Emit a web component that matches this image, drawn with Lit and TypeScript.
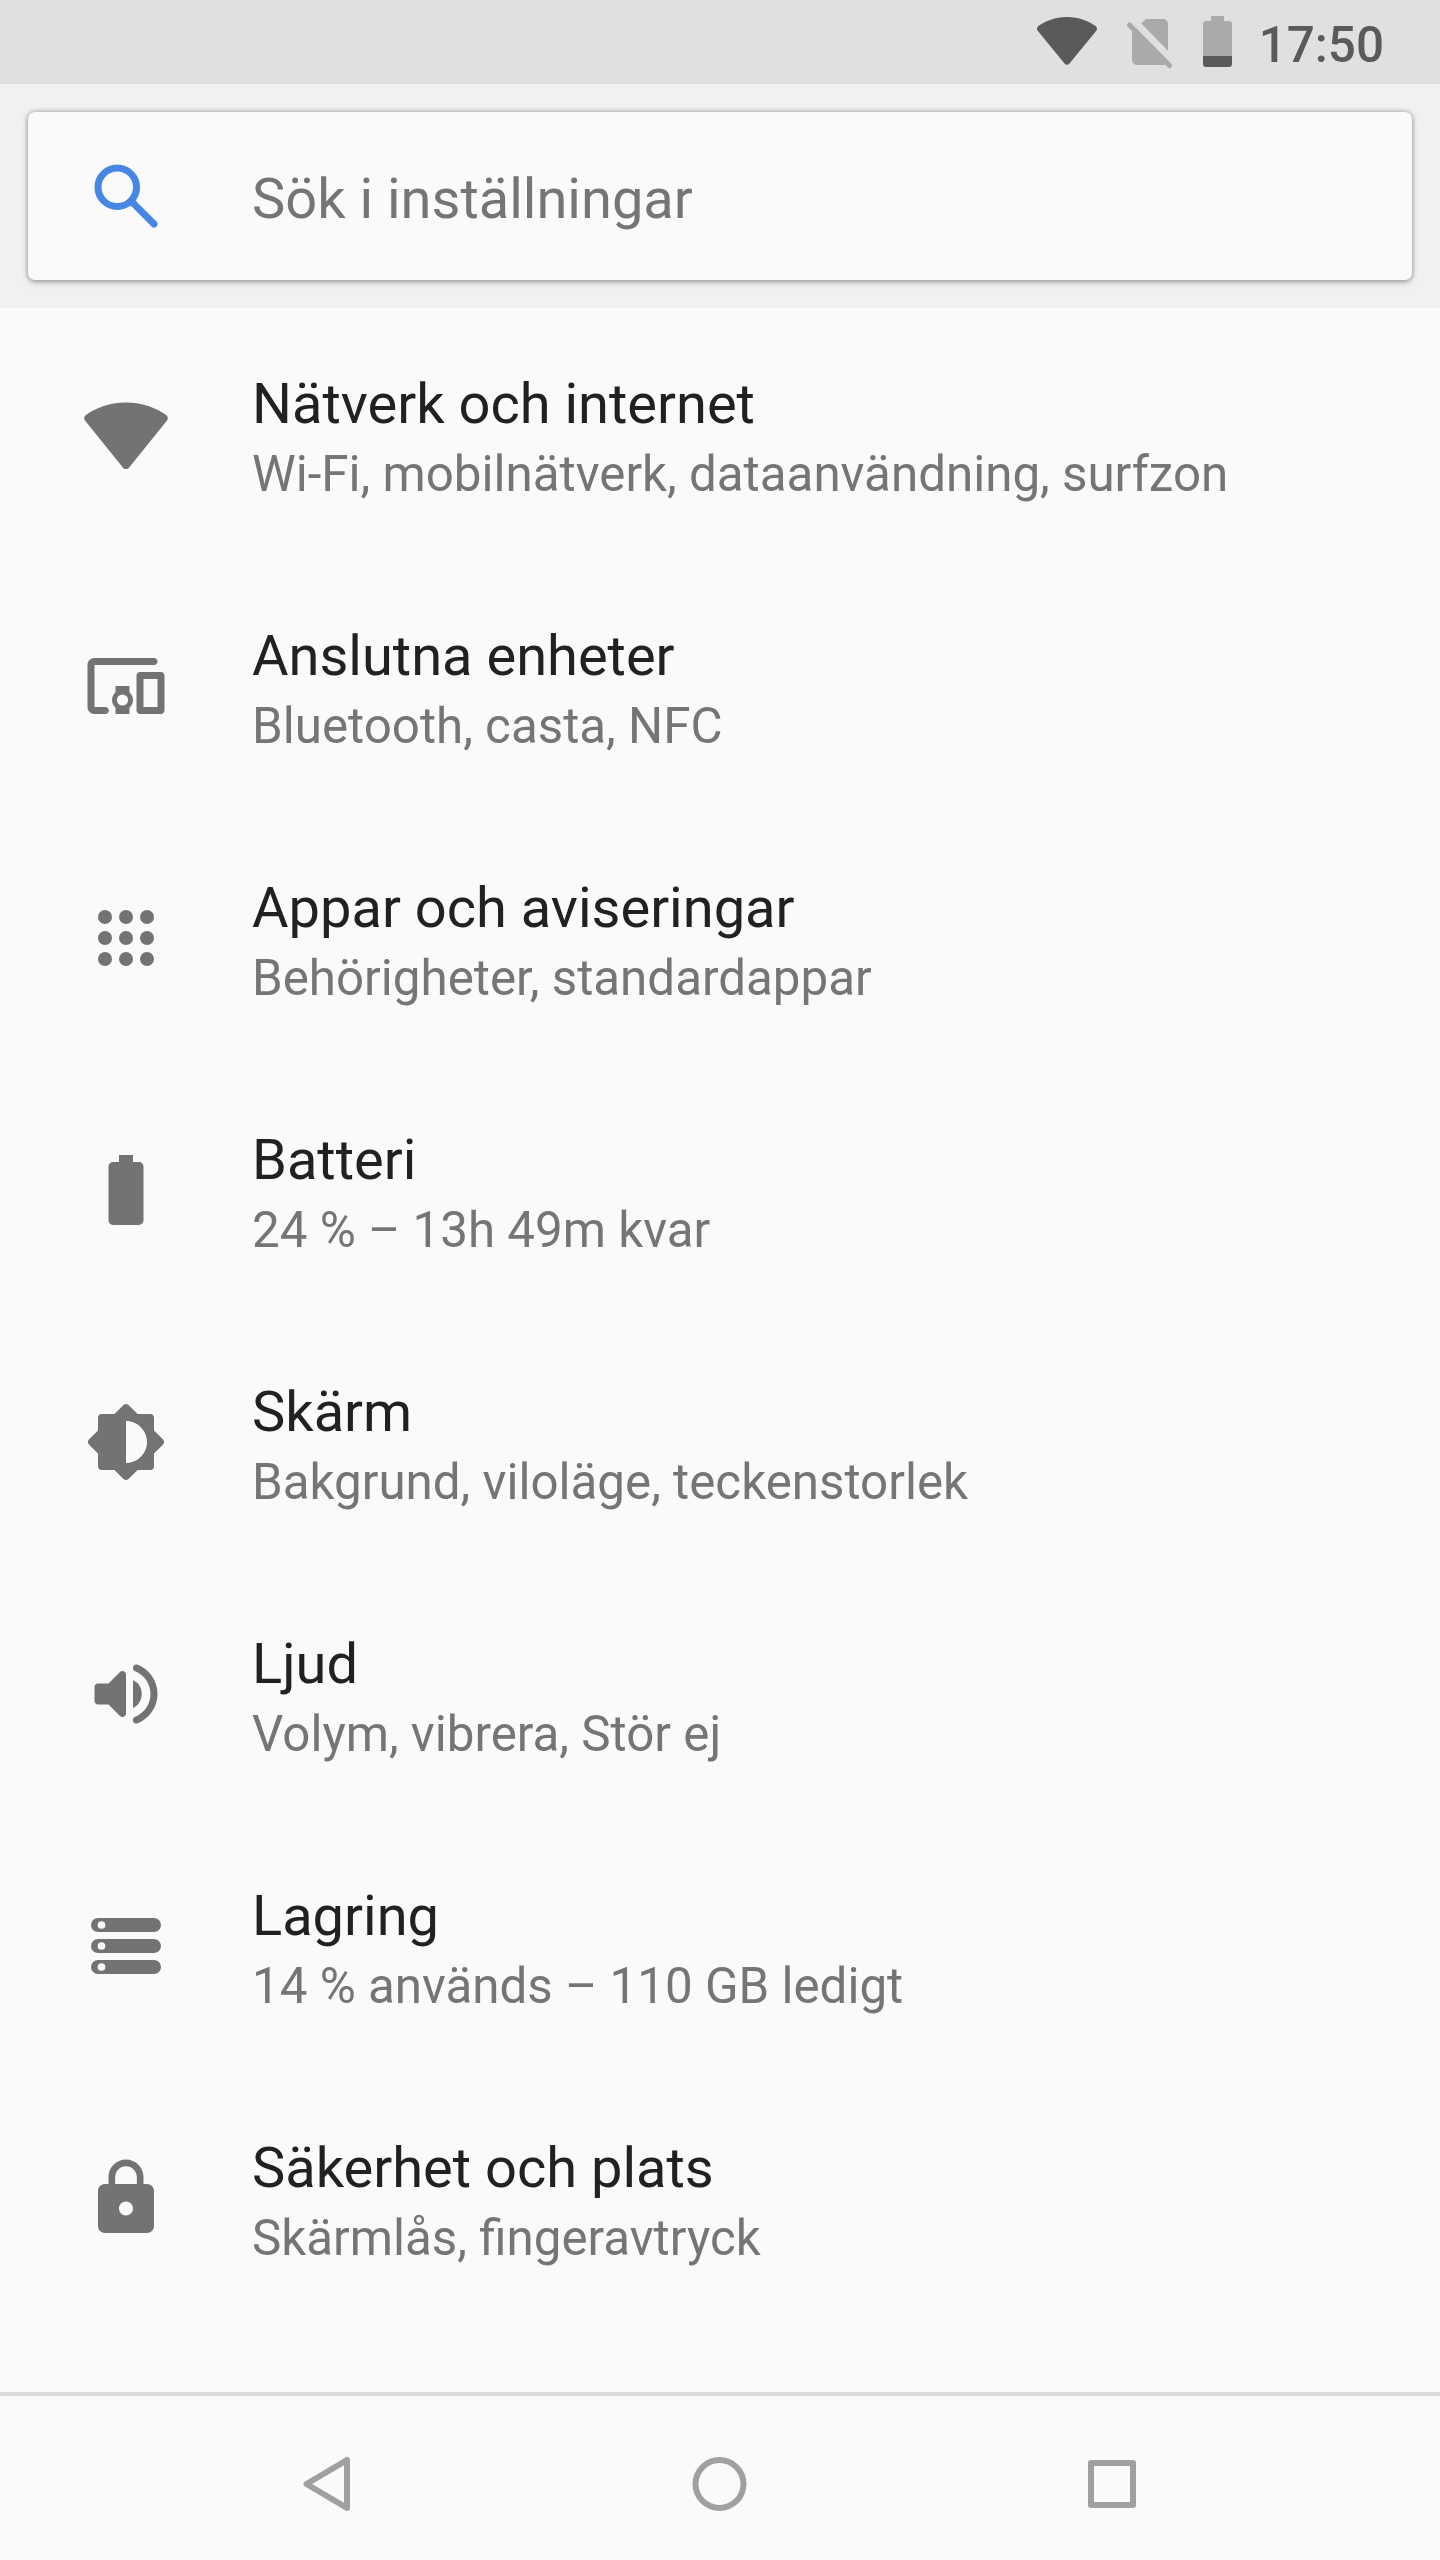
import { LitElement, html, css, svg } from "lit";
import { customElement, property } from "lit/decorators.js";

const icons: Record<string, unknown> = {
  wifi: svg`<path d="M12 3C7 3 3.2 4.7.55 6.55c-.55.4-.65 1.05-.27 1.6L11.1 21.55c.45.6 1.35.6 1.8 0L23.72 8.15c.38-.55.28-1.2-.27-1.6C20.8 4.7 17 3 12 3z"/>`,
  devices: svg`<path fill-rule="evenodd" d="M3 6h17c.55 0 1-.45 1-1s-.45-1-1-1H3c-1.1 0-2 .9-2 2v12c0 1.1.9 2 2 2h3.1c.55 0 1-.45 1-1s-.45-1-1-1H3V6zM13 12H9v1.78a3 3 0 0 0 0 4.44V20h4v-1.78a3 3 0 0 0 0-4.44V12zm-2 5.6a1.6 1.6 0 1 1 0-3.2 1.6 1.6 0 0 1 0 3.2zM22 8h-6c-.5 0-1 .5-1 1v10c0 .5.5 1 1 1h6c.5 0 1-.5 1-1V9c0-.5-.5-1-1-1zm-1 10h-4v-8h4v8z"/>`,
  apps: svg`${[6, 12, 18].map((y) => [6, 12, 18].map((x) => svg`<circle cx=${x} cy=${y} r="2"/>`))}`,
  battery: svg`<path d="M15.67 4H14V2h-4v2H8.33C7.6 4 7 4.6 7 5.33v15.33C7 21.4 7.6 22 8.33 22h7.33c.74 0 1.34-.6 1.34-1.33V5.33C17 4.6 16.4 4 15.67 4z"/>`,
  display: svg`<path fill-rule="evenodd" d="M20 15.31l2.6-2.6c.39-.39.39-1.03 0-1.42L20 8.69V5c0-.55-.45-1-1-1h-3.69l-2.6-2.6c-.39-.39-1.03-.39-1.42 0L8.69 4H5c-.55 0-1 .45-1 1v3.69l-2.6 2.6c-.39.39-.39 1.03 0 1.42l2.6 2.6V19c0 .55.45 1 1 1h3.69l2.6 2.6c.39.39 1.03.39 1.42 0l2.6-2.6H19c.55 0 1-.45 1-1v-3.69zM12 18V6c3.31 0 6 2.69 6 6s-2.69 6-6 6z"/>`,
  sound: svg`<path d="M3 10v4c0 .55.45 1 1 1h3l3.29 3.29c.63.63 1.71.18 1.71-.71V6.41c0-.89-1.08-1.34-1.71-.71L7 9H4c-.55 0-1 .45-1 1zm13.5 2A4.5 4.5 0 0 0 14 7.97v8.05c1.48-.73 2.5-2.25 2.5-4.02zM14 4.45v.2c0 .38.25.71.6.85C17.18 6.53 19 9.06 19 12s-1.82 5.47-4.4 6.5c-.36.14-.6.47-.6.85v.2c0 .63.63 1.07 1.21.85C18.6 19.11 21 15.84 21 12s-2.4-7.11-5.79-8.4c-.58-.23-1.21.22-1.21.85z"/>`,
  storage: svg`<path fill-rule="evenodd" d="${[4, 10, 16]
    .map((y) => `M4 ${y}h16a2 2 0 0 1 0 4H4a2 2 0 0 1 0-4zM5 ${y + 0.9}a1.1 1.1 0 1 0 0 2.2 1.1 1.1 0 0 0 0-2.2z`)
    .join("")}"/>`,
  lock: svg`<path fill-rule="evenodd" d="M18 8h-1V6c0-2.76-2.24-5-5-5S7 3.24 7 6v2H6c-1.1 0-2 .9-2 2v10c0 1.1.9 2 2 2h12c1.1 0 2-.9 2-2V10c0-1.1-.9-2-2-2zm-6 9c-1.1 0-2-.9-2-2s.9-2 2-2 2 .9 2 2-.9 2-2 2zm3.1-9H8.9V6c0-1.71 1.39-3.1 3.1-3.1s3.1 1.39 3.1 3.1v2z"/>`,
};

const items = [
  { icon: "wifi", title: "Nätverk och internet", summary: "Wi-Fi, mobilnätverk, dataanvändning, surfzon" },
  { icon: "devices", title: "Anslutna enheter", summary: "Bluetooth, casta, NFC" },
  { icon: "apps", title: "Appar och aviseringar", summary: "Behörigheter, standardappar" },
  { icon: "battery", title: "Batteri", summary: "24 % – 13h 49m kvar" },
  { icon: "display", title: "Skärm", summary: "Bakgrund, viloläge, teckenstorlek" },
  { icon: "sound", title: "Ljud", summary: "Volym, vibrera, Stör ej" },
  { icon: "storage", title: "Lagring", summary: "14 % används – 110 GB ledigt" },
  { icon: "lock", title: "Säkerhet och plats", summary: "Skärmlås, fingeravtryck" },
];

@customElement("settings-row")
class SettingsRow extends LitElement {
  @property() icon = "";
  @property() heading = "";
  @property() summary = "";

  static styles = css`
    :host {
      display: flex;
      align-items: center;
      box-sizing: border-box;
      height: 252px;
      padding: 0 84px;
      gap: 84px;
    }
    .icon {
      width: 84px;
      height: 84px;
      flex: none;
      fill: #737373;
    }
    .text {
      display: flex;
      flex-direction: column;
      gap: 6px;
      padding-top: 7px;
      white-space: nowrap;
    }
    .title {
      font-size: 56px;
      line-height: 66px;
      color: #212121;
    }
    .summary {
      font-size: 49.3px;
      line-height: 62px;
      color: #757575;
    }
  `;

  render() {
    return html`
      <svg class="icon" viewBox="0 0 24 24">${icons[this.icon]}</svg>
      <div class="text">
        <div class="title">${this.heading}</div>
        <div class="summary">${this.summary}</div>
      </div>
    `;
  }
}

@customElement("app-root")
class AppRoot extends LitElement {
  static styles = css`
    :host {
      display: flex;
      flex-direction: column;
      width: 1440px;
      height: 2560px;
      overflow: hidden;
      background: #fafafa;
      font-family: Roboto, "Liberation Sans", sans-serif;
    }
    .status {
      display: flex;
      justify-content: space-between;
      align-items: center;
      box-sizing: border-box;
      height: 84px;
      padding: 0 56px 0 1036px;
      background: #e0e0e0;
      color: #5a5a5a;
    }
    .status-icons {
      width: 200px;
      height: 84px;
      flex: none;
    }
    .dark {
      fill: #5a5a5a;
    }
    .dim {
      fill: #aaaaaa;
    }
    .slash {
      stroke: #aaaaaa;
      stroke-width: 5;
      stroke-linecap: round;
    }
    .gap {
      stroke: #e0e0e0;
      stroke-width: 7;
    }
    .clock {
      font-size: 49.4px;
      font-weight: 500;
      line-height: 58px;
      padding-top: 5px;
    }
    .header {
      box-sizing: border-box;
      height: 224px;
      padding: 28px;
      background: #f1f1f1;
    }
    .search {
      display: flex;
      align-items: center;
      box-sizing: border-box;
      height: 168px;
      padding: 0 56px;
      gap: 84px;
      border-radius: 7px;
      background: #fafafa;
      box-shadow: 0 2px 7px rgba(0, 0, 0, 0.28), 0 0 4px rgba(0, 0, 0, 0.28);
    }
    .search-icon {
      width: 84px;
      height: 84px;
      fill: none;
      stroke: #4687e4;
      stroke-width: 2;
      stroke-linecap: round;
    }
    .hint {
      font-size: 56px;
      line-height: 66px;
      padding-top: 6px;
      color: #757575;
    }
    .list {
      flex: 1;
    }
    .nav {
      display: flex;
      align-items: center;
      justify-content: center;
      gap: 308px;
      box-sizing: border-box;
      height: 168px;
      padding-top: 12px;
      border-top: 4px solid #dbdbdb;
    }
    .nav-icon {
      width: 84px;
      height: 84px;
      fill: none;
      stroke: #a0a0a0;
      stroke-width: 6;
      stroke-linejoin: round;
    }
  `;

  render() {
    return html`
      <div class="status">
        <svg class="status-icons" viewBox="1036 0 200 84">
          <path class="dark" d="M1067 17c-12 0-21.500 4-28.600 9-1.600 1.200-1.900 3.100-.7 4.700L1064.500 63.500c1.300 1.700 3.700 1.700 5 0L1096.300 30.700c1.200-1.600.9-3.500-.7-4.700C1088.500 21 1079 17 1067 17z"/>
          <path class="dim" d="M1146 19h17c2.800 0 5 2.200 5 5v36c0 2.800-2.200 5-5 5h-26c-2.800 0-5-2.200-5-5V32z"/>
          <path class="gap" d="M1131 18L1178 66"/>
          <path class="slash" d="M1129.500 25L1169.500 65.500"/>
          <path class="dim" d="M1211 16h13v5h5q3 0 3 3v32h-29V24q0-3 3-3h5z"/>
          <path class="dark" d="M1203 56h29v8q0 3-3 3h-23q-3 0-3-3z"/>
        </svg>
        <div class="clock">17:50</div>
      </div>
      <div class="header">
        <div class="search">
          <svg class="search-icon" viewBox="0 0 24 24">
            <circle cx="9.500" cy="9.500" r="5.500"/>
            <path d="M14.900 14.900L20 20M14.200 14.200h.1"/>
          </svg>
          <div class="hint">Sök i inställningar</div>
        </div>
      </div>
      <div class="list">
        ${items.map(
          (i) => html`<settings-row .icon=${i.icon} .heading=${i.title} .summary=${i.summary}></settings-row>`,
        )}
      </div>
      <div class="nav">
        <svg class="nav-icon" viewBox="0 0 84 84"><path d="M61 18V66L20.500 42z"/></svg>
        <svg class="nav-icon" viewBox="0 0 84 84"><circle cx="41.500" cy="42" r="24"/></svg>
        <svg class="nav-icon" viewBox="0 0 84 84"><rect x="21" y="21" width="42" height="42"/></svg>
      </div>
    `;
  }
}
